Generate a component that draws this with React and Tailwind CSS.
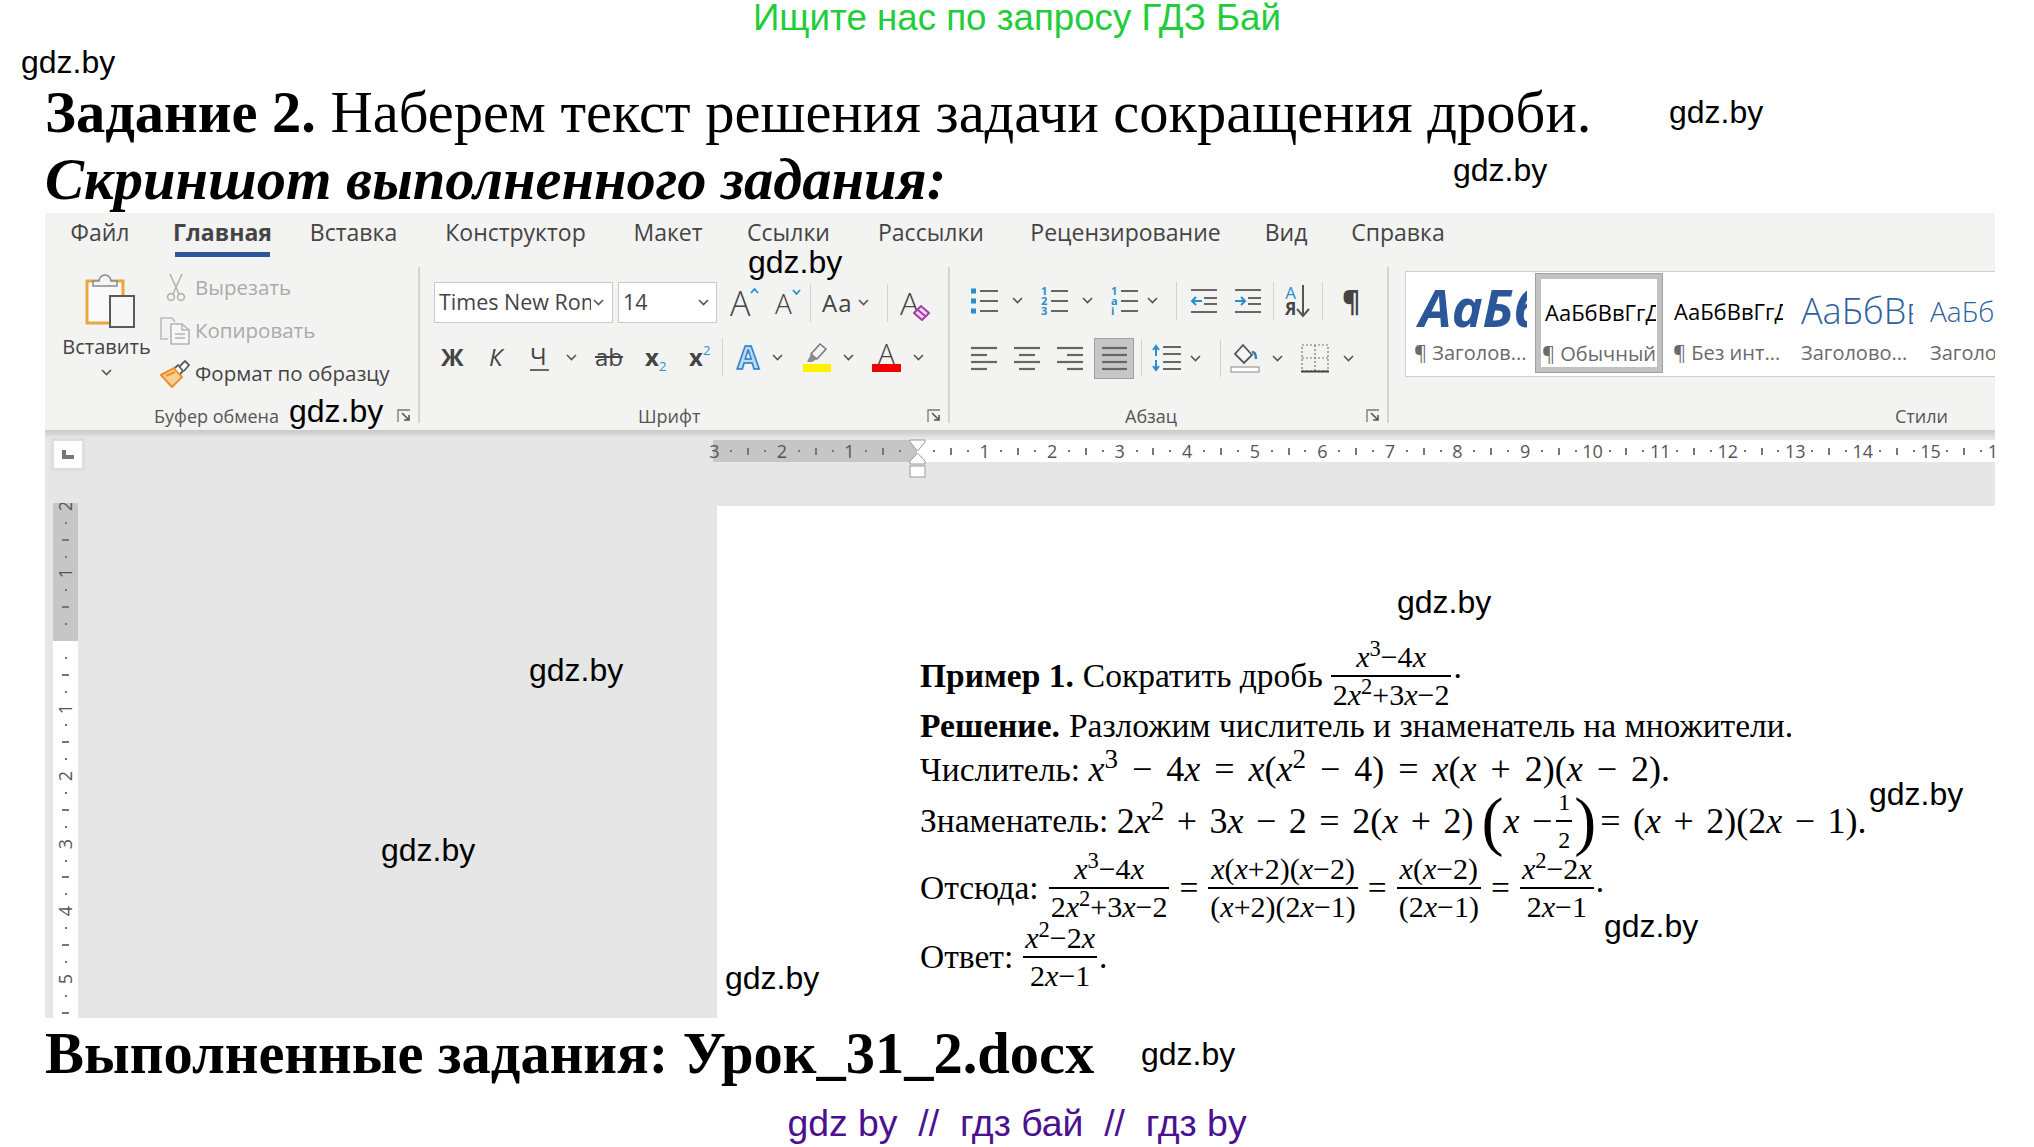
import React from 'react';

const serif = "font-['Liberation_Serif',serif]";
const sans = "font-['Liberation_Sans',sans-serif]";
const ui = "font-['Open_Sans',sans-serif]";

// watermarks lie over the picture, so they get fixed places
const marks = [
  'left-[21px] top-[44px]',
  'left-[1669px] top-[94px]',
  'left-[1453px] top-[152px]',
  'left-[748px] top-[244px]',
  'left-[289px] top-[393px]',
  'left-[1397px] top-[584px]',
  'left-[529px] top-[652px]',
  'left-[381px] top-[832px]',
  'left-[725px] top-[960px]',
  'left-[1869px] top-[776px]',
  'left-[1604px] top-[908px]',
  'left-[1141px] top-[1036px]',
];

const tabs = [
  { label: 'Файл', w: 'w-[56px]' },
  { label: 'Главная', w: 'w-[95px] ml-[47px]', active: true },
  { label: 'Вставка', w: 'w-[85px] ml-[41px]' },
  { label: 'Конструктор', w: 'w-[139px] ml-[50px]' },
  { label: 'Макет', w: 'w-[68px] ml-[49px]' },
  { label: 'Ссылки', w: 'w-[83px] ml-[45px]' },
  { label: 'Рассылки', w: 'w-[106px] ml-[48px]' },
  { label: 'Рецензирование', w: 'w-[189px] ml-[47px]' },
  { label: 'Вид', w: 'w-[40px] ml-[46px]' },
  { label: 'Справка', w: 'w-[94px] ml-[45px]' },
];

const Chevron = ({ className = '' }) => (
  <svg width="11" height="7" viewBox="0 0 11 7" className={className}>
    <polyline points="1,1 5.5,5.5 10,1" fill="none" stroke="#555" strokeWidth="1.6" />
  </svg>
);

const Launcher = () => (
  <svg width="15" height="14" viewBox="0 0 15 14" className="absolute right-[6px] bottom-[7px]">
    <path d="M1 13V1h12" fill="none" stroke="#777" strokeWidth="1.3" />
    <path d="M5 4l7 7M12 6v5H7" fill="none" stroke="#555" strokeWidth="1.6" />
  </svg>
);

const Sep = () => <div className="w-px h-[38px] bg-[#d2d2d2]" />;

const PasteIcon = () => (
  <svg width="50" height="56" viewBox="0 0 50 56">
    <rect x="2" y="8" width="36" height="42" fill="#fafafa" stroke="#eba63f" strokeWidth="3" />
    <path d="M8 13V8h6a6 6 0 0 1 12 0h6v5z" fill="#f5f5f5" stroke="#8a8a8a" strokeWidth="1.5" />
    <rect x="25" y="23" width="24" height="31" fill="#f6f6f6" stroke="#5a5a5a" strokeWidth="2" />
  </svg>
);

const ScissorsIcon = () => (
  <svg width="20" height="29" viewBox="0 0 20 29">
    <path d="M4 1l9 20M16 1L7 21" fill="none" stroke="#b4b4b4" strokeWidth="1.6" />
    <circle cx="5" cy="24" r="3.4" fill="none" stroke="#b4b4b4" strokeWidth="1.6" />
    <circle cx="15" cy="24" r="3.4" fill="none" stroke="#b4b4b4" strokeWidth="1.6" />
  </svg>
);

const CopyIcon = () => (
  <svg width="30" height="28" viewBox="0 0 30 28">
    <path d="M8 22H1V1h11l3 4" fill="#f3f3f3" stroke="#bcbcbc" strokeWidth="1.6" />
    <path d="M11 7h11l7 6v14H11z" fill="#f7f7f7" stroke="#b4b4b4" strokeWidth="1.6" />
    <path d="M22 7v6h7M15 17h10M15 21h10" fill="none" stroke="#b4b4b4" strokeWidth="1.5" />
  </svg>
);

const BrushIcon = () => (
  <svg width="30" height="28" viewBox="0 0 30 28">
    <path d="M1 15l13-7 8 9-10 10z" fill="#f9cf94" stroke="#e8912c" strokeWidth="2" />
    <path d="M6 16l9-4" stroke="#e8912c" strokeWidth="2" />
    <path d="M15 8l3-3 5 6-3 3M20 6l5-5 4 4-5 6" fill="#fff" stroke="#5c5c5c" strokeWidth="1.8" />
  </svg>
);

const EraserIcon = () => (
  <svg width="17" height="17" viewBox="0 0 17 17">
    <path d="M1 9l7-7 8 7-7 7z" fill="#f2d9f2" stroke="#a33ea8" strokeWidth="2" />
    <path d="M5 6l7 6" stroke="#a33ea8" strokeWidth="2" />
  </svg>
);

const HighlightPen = () => (
  <svg width="26" height="21" viewBox="0 0 26 21">
    <path d="M16 1l6 5-9 10-6-5z" fill="#f4f4f4" stroke="#777" strokeWidth="1.5" />
    <path d="M7 11l6 5-5 3H3z" fill="#8a8a8a" />
  </svg>
);

const Lines = ({ rows }) => (
  <svg width="27" height="28" viewBox="0 0 27 28">
    {rows.map((r, i) => (
      <line key={i} x1={r[0]} x2={r[1]} y1={r[2]} y2={r[2]} stroke="#666" strokeWidth="2.2" />
    ))}
  </svg>
);

const Bullets = () => (
  <svg width="27" height="28" viewBox="0 0 27 28">
    {[4, 14, 24].map((y) => (
      <g key={y}>
        <rect x="0" y={y - 2.5} width="5" height="5" fill="#2a8dd0" />
        <line x1="9" x2="27" y1={y} y2={y} stroke="#666" strokeWidth="2" />
      </g>
    ))}
  </svg>
);

const Numbered = ({ glyphs }) => (
  <svg width="27" height="28" viewBox="0 0 27 28">
    {[4, 14, 24].map((y, i) => (
      <g key={y}>
        <text x="0" y={y + 4} fontSize="11" fontWeight="700" fill="#2a8dd0" fontFamily="Open Sans">{glyphs[i]}</text>
        <line x1="10" x2="27" y1={y} y2={y} stroke="#666" strokeWidth="2" />
      </g>
    ))}
  </svg>
);

const Indent = ({ out }) => (
  <svg width="27" height="26" viewBox="0 0 27 26">
    <path d="M1 2h26M1 24h26M14 10h13M14 16h13" stroke="#666" strokeWidth="2" />
    <path d={out ? 'M12 13H2M6 9l-4 4 4 4' : 'M1 13h10M7 9l4 4-4 4'} fill="none" stroke="#2a8dd0" strokeWidth="2" />
  </svg>
);

const Spacing = () => (
  <svg width="29" height="28" viewBox="0 0 29 28">
    <path d="M11 3h18M11 10h18M11 18h18M11 25h18" stroke="#666" strokeWidth="2" />
    <path d="M4 2v10M1 6l3-4 3 4M4 16v10M1 22l3 4 3-4" fill="none" stroke="#2a8dd0" strokeWidth="2" />
  </svg>
);

const Bucket = () => (
  <svg width="30" height="30" viewBox="0 0 30 30">
    <path d="M13 2l9 10-8 8-9-9z" fill="#f6f6f6" stroke="#555" strokeWidth="1.8" />
    <path d="M22 9c3 0 4 2 4 7" fill="none" stroke="#2a7fc0" strokeWidth="2.4" />
    <rect x="1" y="24" width="28" height="5" fill="#fff" stroke="#888" />
  </svg>
);

const Borders = () => (
  <svg width="28" height="29" viewBox="0 0 28 29">
    <path d="M1 1h26v26H1zM14 1v26M1 14h26" fill="none" stroke="#777" strokeWidth="1.2" strokeDasharray="2 2" />
    <path d="M0 27.5h28" stroke="#444" strokeWidth="2" />
  </svg>
);

const Clipboard = () => (
  <div className="relative w-[373px] h-full flex flex-col">
    <div className="flex h-[145px]">
      <div className="w-[115px] flex flex-col items-center pt-[13px] pl-[8px]">
        <span className="ml-[6px] flex"><PasteIcon /></span>
        <span className="text-[20px] leading-[28px] mt-[4px] text-[#444]">Вставить</span>
        <Chevron className="mt-[8px]" />
      </div>
      <div className="flex flex-col pt-[6px]">
        <div className="flex items-center h-[43px] text-[#aaa]">
          <span className="w-[35px] flex justify-center -ml-[2px] mr-[2px]"><ScissorsIcon /></span>
          <span className="text-[20.5px]">Вырезать</span>
        </div>
        <div className="flex items-center h-[43px] text-[#aaa]">
          <span className="w-[35px] flex justify-start"><CopyIcon /></span>
          <span className="text-[20.5px]">Копировать</span>
        </div>
        <div className="flex items-center h-[43px] text-[#444]">
          <span className="w-[35px] flex justify-start"><BrushIcon /></span>
          <span className="text-[20.5px]">Формат по образцу</span>
        </div>
      </div>
    </div>
    <div className="pl-[109px] text-[18px] leading-[22px] text-[#555]">Буфер обмена</div>
    <Launcher />
  </div>
);

const FontGroup = () => (
  <div className="relative w-[528px] h-full flex flex-col pl-[14px] text-[#444]">
    <div className="flex items-center h-[41px] mt-[22px]">
      <div className="w-[179px] h-[41px] bg-white border border-[#c8c8c8] flex items-center justify-between pl-[4px] pr-[8px]">
        <span className="text-[21.5px] w-[152px] overflow-hidden whitespace-nowrap">Times New Roman</span>
        <Chevron />
      </div>
      <div className="ml-[5px] w-[99px] h-[41px] bg-white border border-[#c8c8c8] flex items-center justify-between pl-[4px] pr-[7px]">
        <span className="text-[21.5px]">14</span>
        <Chevron />
      </div>
      <div className="ml-[13px] w-[27px] relative text-[34px] leading-none font-light">A
        <svg width="9" height="6" viewBox="0 0 9 6" className="absolute left-[20px] top-[2px]"><polyline points="1,5 4.5,1 8,5" fill="none" stroke="#2a8dd0" strokeWidth="1.8" /></svg>
      </div>
      <div className="ml-[18px] w-[25px] relative text-[28px] leading-none font-light">A
        <svg width="9" height="6" viewBox="0 0 9 6" className="absolute left-[17px] top-[0px]"><polyline points="1,1 4.5,5 8,1" fill="none" stroke="#2a8dd0" strokeWidth="1.8" /></svg>
      </div>
      <div className="ml-[10px]"><Sep /></div>
      <div className="ml-[11px] w-[36px] text-[24px] leading-none tracking-[1px]">Aa</div>
      <Chevron />
      <div className="ml-[18px]"><Sep /></div>
      <div className="ml-[12px] w-[32px] relative text-[32px] leading-none font-light">A
        <span className="absolute left-[13px] top-[17px]"><EraserIcon /></span>
      </div>
    </div>
    <div className="flex items-center h-[42px] mt-[13px]">
      <span className="ml-[7px] w-[26px] text-[24px] font-bold leading-none">Ж</span>
      <span className="ml-[22px] w-[17px] text-[24px] italic leading-none">К</span>
      <span className="ml-[24px] w-[19px] text-[24px] leading-[26px] border-b-2 border-[#666]">Ч</span>
      <Chevron className="ml-[17px]" />
      <span className="ml-[18px] w-[28px] text-[24px] leading-none line-through">ab</span>
      <span className="ml-[22px] w-[26px] flex items-baseline text-[24px] font-bold leading-none">x<span className="text-[13px] font-normal text-[#2a8dd0] translate-y-[5px]">2</span></span>
      <span className="ml-[18px] w-[22px] flex items-baseline text-[24px] font-bold leading-none">x<span className="text-[13px] font-normal text-[#2a8dd0] -translate-y-[11px]">2</span></span>
      <div className="ml-[11px]"><Sep /></div>
      <span className="ml-[14px] w-[26px] text-[32px] leading-none font-bold text-[#bcdcf5] [-webkit-text-stroke:1.5px_#2a7fc8]">A</span>
      <Chevron className="ml-[9px]" />
      <div className="ml-[20px] w-[28px] flex flex-col items-center">
        <HighlightPen />
        <div className="w-[28px] h-[8px] bg-[#fff200]" />
      </div>
      <Chevron className="ml-[12px]" />
      <div className="ml-[18px] w-[29px] flex flex-col items-center">
        <span className="text-[28px] leading-[21px] font-light">A</span>
        <div className="w-[29px] h-[8px] bg-[#f00000]" />
      </div>
      <Chevron className="ml-[12px]" />
    </div>
    <div className="mt-auto mb-[3px] pl-[204px] text-[18px] leading-[22px] text-[#555]">Шрифт</div>
    <Launcher />
  </div>
);

const ParagraphGroup = () => (
  <div className="relative w-[437px] h-full flex flex-col pl-[21px] text-[#444]">
    <div className="flex items-center h-[41px] mt-[20px]">
      <Bullets />
      <Chevron className="ml-[14px]" />
      <span className="ml-[18px]"><Numbered glyphs={['1', '2', '3']} /></span>
      <Chevron className="ml-[14px]" />
      <span className="ml-[18px]"><Numbered glyphs={['1', 'a', 'i']} /></span>
      <Chevron className="ml-[9px]" />
      <div className="ml-[18px]"><Sep /></div>
      <span className="ml-[13px]"><Indent out /></span>
      <span className="ml-[17px]"><Indent /></span>
      <div className="ml-[12px]"><Sep /></div>
      <div className="ml-[11px] w-[30px] flex items-center">
        <div className="flex flex-col items-center text-[17px] leading-[16px] font-bold">
          <span className="text-[#2a8dd0] font-normal">A</span>
          <span>Я</span>
        </div>
        <svg width="14" height="34" viewBox="0 0 14 34"><path d="M7 1v31M1 25l6 7 6-7" fill="none" stroke="#555" strokeWidth="2" /></svg>
      </div>
      <div className="ml-[7px]"><Sep /></div>
      <span className="ml-[19px] text-[28px] font-bold leading-none">¶</span>
    </div>
    <div className="flex items-center h-[42px] mt-[16px]">
      <Lines rows={[[0, 26, 4], [0, 16, 11], [0, 26, 18], [0, 16, 25]]} />
      <span className="ml-[16px]"><Lines rows={[[0, 26, 4], [5, 21, 11], [0, 26, 18], [5, 21, 25]]} /></span>
      <span className="ml-[16px]"><Lines rows={[[0, 26, 4], [10, 26, 11], [0, 26, 18], [10, 26, 25]]} /></span>
      <div className="ml-[10px] w-[40px] h-[41px] bg-[#c6c6c6] border border-[#a0a0a0] flex items-center justify-center">
        <Lines rows={[[1, 26, 4], [1, 26, 11], [1, 26, 18], [1, 26, 25]]} />
      </div>
      <div className="ml-[7px]"><Sep /></div>
      <span className="ml-[10px]"><Spacing /></span>
      <Chevron className="ml-[9px]" />
      <div className="ml-[19px]"><Sep /></div>
      <span className="ml-[9px]"><Bucket /></span>
      <Chevron className="ml-[12px]" />
      <span className="ml-[18px]"><Borders /></span>
      <Chevron className="ml-[14px]" />
    </div>
    <div className="mt-auto mb-[3px] pl-[154px] text-[18px] leading-[22px] text-[#555]">Абзац</div>
    <Launcher />
  </div>
);

const StyleItem = ({ w, preview, label }) => (
  <div className={`${w} shrink-0 flex flex-col pt-[14px] items-start`}>
    <div className="h-[50px] w-full overflow-hidden whitespace-nowrap flex items-center">{preview}</div>
    <div className="mt-[3px] w-full overflow-hidden whitespace-nowrap text-[20px] leading-[28px] text-[#6a6a6a]">{label}</div>
  </div>
);

const StylesGroup = () => (
  <div className="flex-1 min-w-0 h-full flex flex-col pl-[16px]">
    <div className="mt-[11px] h-[106px] bg-white border-y border-l border-[#d0d0d0] flex items-start overflow-hidden">
      <div className="ml-[8px]">
        <StyleItem
          w="w-[113px]"
          preview={<span className="text-[52px] leading-none font-bold italic text-[#2b579a] ml-[5px] -mt-[8px]">АаБб</span>}
          label="¶ Заголов..."
        />
      </div>
      <div className="ml-[8px] mt-[1px] w-[128px] h-[100px] border-[6px] border-[#c2c2c2] outline-1 outline-[#a0a0a0] -outline-offset-1 bg-white px-[1px] shrink-0">
        <div className="-mt-[6px] overflow-hidden">
          <StyleItem
            w="w-full"
            preview={<span className="text-[22px] text-black ml-[3px]">АаБбВвГгДд</span>}
            label="¶ Обычный"
          />
        </div>
      </div>
      <div className="ml-[10px]">
        <StyleItem
          w="w-[110px]"
          preview={<span className="text-[22px] text-black ml-[1px]">АаБбВвГгДд</span>}
          label="¶ Без инт..."
        />
      </div>
      <div className="ml-[18px]">
        <StyleItem
          w="w-[112px]"
          preview={<span className="text-[36px] font-light text-[#2f5f9e]">АаБбВв</span>}
          label="Заголово..."
        />
      </div>
      <div className="ml-[17px]">
        <StyleItem
          w="w-[90px]"
          preview={<span className="text-[28px] font-light text-[#2f5f9e]">АаБбВв</span>}
          label="Заголовок"
        />
      </div>
    </div>
    <div className="mt-auto mb-[3px] pl-[490px] text-[18px] leading-[22px] text-[#555]">Стили</div>
  </div>
);

const Divider = () => <div className="w-[2px] my-[7px] bg-[#d4d4d4]" />;

const buildTicks = (from, to) => {
  const out = [];
  for (let i = from; i < to; i++) out.push(i);
  return out;
};

// one cell per quarter step: number, dot, tick, dot
const RulerCell = ({ step, vertical }) => {
  const q = ((step % 4) + 4) % 4;
  const size = vertical ? 'h-[16.9px] w-full' : 'w-[16.9px] h-full';
  let inner;
  if (q === 0) {
    inner = <span className={`text-[18px] leading-none text-[#555] ${vertical ? '-rotate-90' : ''}`}>{Math.abs(step / 4)}</span>;
  } else if (q === 2) {
    inner = <span className={vertical ? 'w-[7px] h-[2px] bg-[#777]' : 'w-[2px] h-[7px] bg-[#777]'} />;
  } else {
    inner = <span className="w-[2px] h-[2px] bg-[#777]" />;
  }
  return <div className={`${size} shrink-0 flex items-center justify-center`}>{inner}</div>;
};

const HRuler = () => (
  <div className="relative flex h-[22px] mt-[3px]">
    <div className="w-[204px] shrink-0 bg-[#c6c6c6] flex justify-end pr-[8.45px]">
      {buildTicks(-12, 0).map((s) => <RulerCell key={s} step={s} />)}
    </div>
    <div className="flex-1 min-w-0 bg-white flex pl-[8.45px] overflow-hidden">
      {buildTicks(1, 65).map((s) => <RulerCell key={s} step={s} />)}
    </div>
    {/* indent marker sits over the ruler */}
    <svg width="17" height="40" viewBox="0 0 17 40" className="absolute left-[196px] -top-[1px]">
      <path d="M1 1h15v2l-7.5 9L1 3zM8.5 14l7.5 8v3H1v-3z" fill="#fff" stroke="#9a9a9a" strokeWidth="1" />
      <rect x="1" y="27" width="15" height="11" fill="#fff" stroke="#9a9a9a" />
    </svg>
  </div>
);

const VRuler = () => (
  <div className="w-[25px] flex flex-col h-[515px] overflow-hidden">
    <div className="h-[138px] bg-[#c6c6c6] flex flex-col justify-end pb-[8.45px]">
      {buildTicks(-8, 0).map((s) => <RulerCell key={s} step={s} vertical />)}
    </div>
    <div className="flex-1 bg-white flex flex-col pt-[8.45px] overflow-hidden">
      {buildTicks(1, 24).map((s) => <RulerCell key={s} step={s} vertical />)}
    </div>
  </div>
);

const X = () => <i>x</i>;

const Frac = ({ top, bottom, size = 'text-[30px]' }) => (
  <span className={`inline-flex flex-col items-center mx-[2px] ${size} leading-[36px] align-middle`}>
    <span className="px-[2px]">{top}</span>
    <span className="self-stretch h-[2px] bg-black" />
    <span className="px-[2px]">{bottom}</span>
  </span>
);

// formula text runs larger and looser than the body text
const mathCls = 'text-[36px] [word-spacing:3.5px] whitespace-pre';

const n1 = <><X /><sup>3</sup>−4<X /></>;
const d1 = <>2<X /><sup>2</sup>+3<X />−2</>;
const a1 = <><X /><sup>2</sup>−2<X /></>;
const a2 = <>2<X />−1</>;

const DocPage = () => (
  <div className={`flex-1 h-[512px] mt-[3px] bg-white pl-[203px] pt-[132px] text-black whitespace-nowrap ${serif} text-[33.5px]`}>
    <div className="flex items-center h-[76px]">
      <b>Пример 1.</b><span className="ml-[9px]">Сократить дробь</span>
      <span className="ml-[6px]"><Frac top={n1} bottom={d1} /></span>
      <span className="self-end mb-[22px]">.</span>
    </div>
    <div className="flex items-center h-[24px]">
      <b>Решение.</b><span className="ml-[9px]">Разложим числитель и знаменатель на множители.</span>
    </div>
    <div className="h-[62px] leading-[62px]">
      Числитель: <span className="text-[36px] [word-spacing:5px] whitespace-pre"><X /><sup>3</sup> − 4<X /> = <X />(<X /><sup>2</sup> − 4) = <X />(<X /> + 2)(<X /> − 2).</span>
    </div>
    <div className="flex items-center h-[42px]">
      <span className="whitespace-pre">Знаменатель: </span>
      <span className={mathCls}>2<X /><sup>2</sup> + 3<X /> − 2 = 2(<X /> + 2)</span>
      <span className="ml-[8px] text-[66px] leading-none font-light">(</span>
      <span className={mathCls}><X /> −</span>
      <span className="ml-[2px] flex"><Frac top="1" bottom="2" size="text-[24px]" /></span>
      <span className="text-[66px] leading-none font-light">)</span>
      <span className={`ml-[4px] ${mathCls}`}>= (<X /> + 2)(2<X /> − 1).</span>
    </div>
    <div className="flex items-center h-[92px]">
      <span className="mr-[8px]">Отсюда:</span>
      <Frac top={n1} bottom={d1} />
      <span className="mx-[8px]">=</span>
      <Frac top={<><X />(<X />+2)(<X />−2)</>} bottom={<>(<X />+2)(2<X />−1)</>} />
      <span className="mx-[8px]">=</span>
      <Frac top={<><X />(<X />−2)</>} bottom={<>(2<X />−1)</>} />
      <span className="mx-[8px]">=</span>
      <Frac top={a1} bottom={a2} />
      <span className="self-end mb-[28px]">.</span>
    </div>
    <div className="flex items-center h-[46px]">
      <span className="mr-[8px]">Ответ:</span>
      <Frac top={a1} bottom={a2} />
      <span className="self-end -mb-[2px]">.</span>
    </div>
  </div>
);

const WordShot = () => (
  <div className={`ml-[45px] w-[1950px] h-[805px] bg-[#e6e6e6] ${ui} overflow-hidden`}>
    <div className="h-[217px] bg-[#f3f3f2] flex flex-col">
      <div className="h-[47px] flex items-start pl-[27px] text-[23px] text-[#444] whitespace-nowrap">
        {tabs.map((t) => (
          <div key={t.label} className={`${t.w} shrink-0 h-[44px] flex items-center justify-center ${t.active ? 'font-bold border-b-[5px] border-[#2b579a]' : 'pb-[5px]'}`}>
            {t.label}
          </div>
        ))}
      </div>
      <div className="h-[170px] flex whitespace-nowrap">
        <Clipboard />
        <Divider />
        <FontGroup />
        <Divider />
        <ParagraphGroup />
        <Divider />
        <StylesGroup />
      </div>
    </div>
    <div className="h-[7px] bg-linear-to-b from-[#c9c9c9] to-[#e2e2e2]" />
    <div className="flex h-[66px]">
      <div className="shrink-0 ml-[6px] mt-[1px] w-[34px] h-[33px] bg-white border-[3px] border-[#dedede] flex items-center justify-center">
        <div className="w-[12px] h-[9px] border-l-[4px] border-b-[4px] border-[#777]" />
      </div>
      <div className="ml-[628px] flex-1 min-w-0"><HRuler /></div>
    </div>
    <div className="flex">
      <div className="ml-[8px]"><VRuler /></div>
      <div className="w-[639px] shrink-0" />
      <DocPage />
    </div>
  </div>
);

export default function App() {
  return (
    <div className="relative w-[2034px] h-[1147px] bg-white overflow-hidden text-black">
      <div className={`h-[34px] text-center text-[36.7px] leading-[36px] text-[#22cc3a] ${sans}`}>
        Ищите нас по запросу ГДЗ Бай
      </div>
      <div className={`mt-[46px] ml-[45px] h-[66px] text-[58.5px] leading-[66px] whitespace-nowrap ${serif}`}>
        <b>Задание 2.</b> Наберем текст решения задачи сокращения дроби.
      </div>
      <div className={`ml-[45px] h-[67px] text-[58.5px] leading-[68px] font-bold italic whitespace-nowrap ${serif}`}>
        Скриншот выполненного задания:
      </div>
      <WordShot />
      <div className={`ml-[45px] h-[70px] text-[58.5px] leading-[72px] font-bold whitespace-nowrap ${serif}`}>
        Выполненные задания: Урок_31_2.docx
      </div>
      <div className={`h-[59px] text-center text-[37.4px] leading-[70px] text-[#4b1191] whitespace-pre ${sans}`}>
        gdz by  //  гдз бай  //  гдз by
      </div>
      {marks.map((m) => (
        <div key={m} className={`absolute ${m} text-[32px] leading-[36px] ${sans}`}>gdz.by</div>
      ))}
    </div>
  );
}
